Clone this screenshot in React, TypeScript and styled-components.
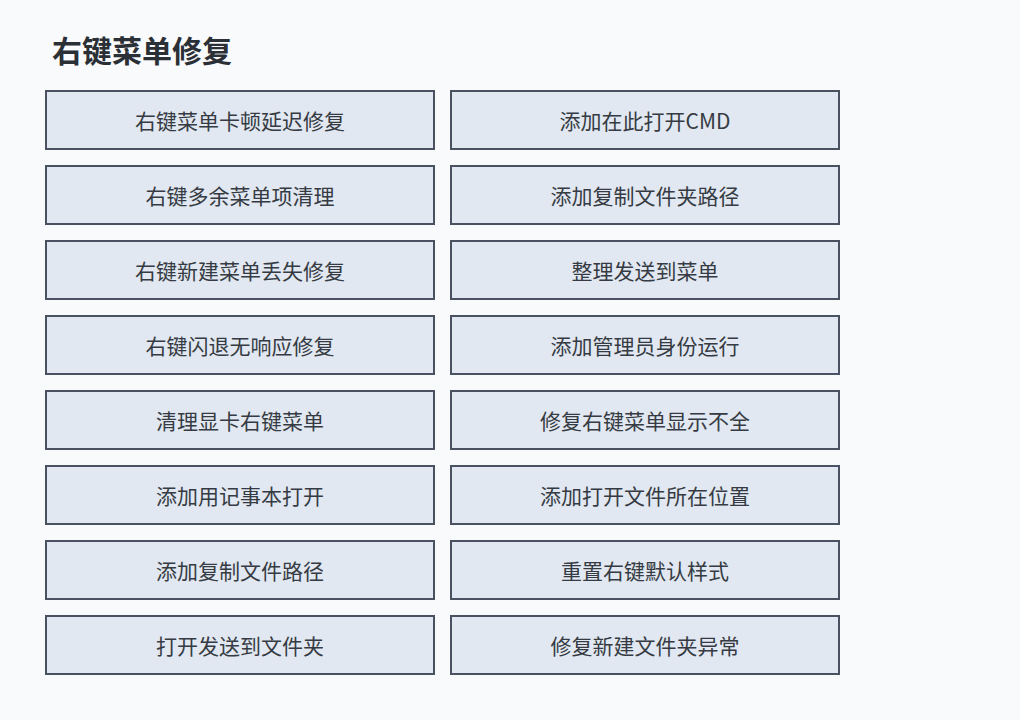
import React from "react";
import styled, { createGlobalStyle } from "styled-components";

const Global = createGlobalStyle`
  html, body {
    margin: 0;
    padding: 0;
    background: #f8fafc;
  }
  body {
    font-family: "Noto Sans CJK SC", "Noto Sans", sans-serif;
  }
`;

const Page = styled.div`
  padding: 29px 45px 40px 45px;
  width: 1020px;
  height: 720px;
  box-sizing: border-box;
  background: #f8fafc;
`;

const Title = styled.h1`
  margin: 0 0 21px 7px;
  font-size: 30px;
  line-height: 40px;
  font-weight: 700;
  color: #2b2f36;
`;

const Grid = styled.div`
  display: grid;
  grid-template-columns: 390px 390px;
  column-gap: 15px;
  row-gap: 15px;
`;

const ActionButton = styled.button`
  box-sizing: border-box;
  height: 60px;
  border: 2px solid #4a5160;
  background: #e1e8f1;
  color: #363b43;
  font-family: "Noto Sans CJK SC", "Noto Sans", sans-serif;
  font-size: 21px;
  line-height: 1;
  padding: 0;
  display: flex;
  align-items: center;
  justify-content: center;
  cursor: pointer;
`;

const items: [string, string][] = [
  ["右键菜单卡顿延迟修复", "添加在此打开CMD"],
  ["右键多余菜单项清理", "添加复制文件夹路径"],
  ["右键新建菜单丢失修复", "整理发送到菜单"],
  ["右键闪退无响应修复", "添加管理员身份运行"],
  ["清理显卡右键菜单", "修复右键菜单显示不全"],
  ["添加用记事本打开", "添加打开文件所在位置"],
  ["添加复制文件路径", "重置右键默认样式"],
  ["打开发送到文件夹", "修复新建文件夹异常"],
];

export default function App() {
  return (
    <Page>
      <Global />
      <Title>右键菜单修复</Title>
      <Grid>
        {items.flat().map((label) => (
          <ActionButton key={label}>{label}</ActionButton>
        ))}
      </Grid>
    </Page>
  );
}
